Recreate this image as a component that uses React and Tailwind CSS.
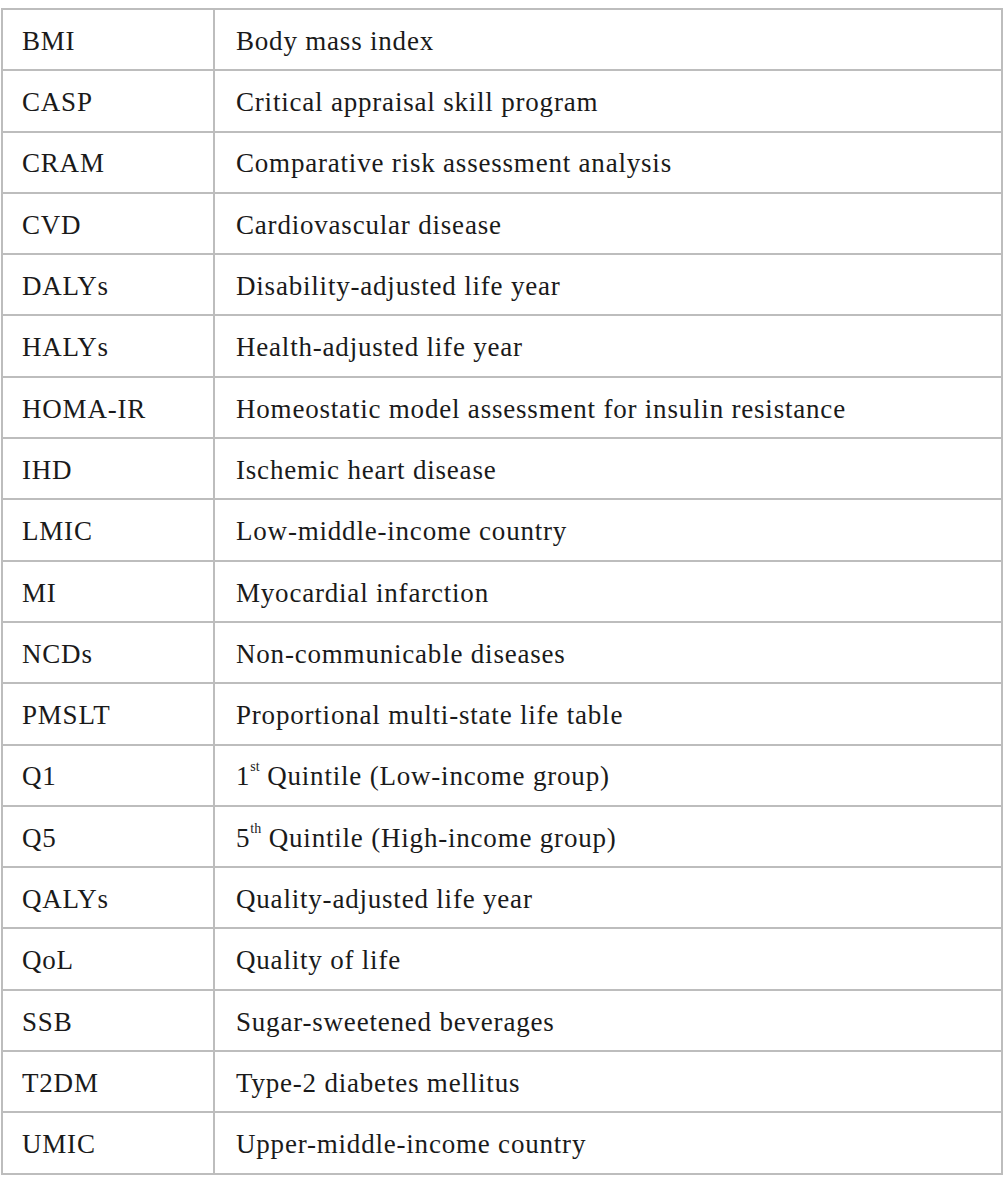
import React from "react";

const Sup = ({ n, s, rest }) => (
  <span>
    {n}
    <sup className="text-[14px] align-[7px] leading-none tracking-normal">{s}</sup>
    {" " + rest}
  </span>
);

const rows = [
  ["BMI", "Body mass index"],
  ["CASP", "Critical appraisal skill program"],
  ["CRAM", "Comparative risk assessment analysis"],
  ["CVD", "Cardiovascular disease"],
  ["DALYs", "Disability-adjusted life year"],
  ["HALYs", "Health-adjusted life year"],
  ["HOMA-IR", "Homeostatic model assessment for insulin resistance"],
  ["IHD", "Ischemic heart disease"],
  ["LMIC", "Low-middle-income country"],
  ["MI", "Myocardial infarction"],
  ["NCDs", "Non-communicable diseases"],
  ["PMSLT", "Proportional multi-state life table"],
  ["Q1", <Sup n="1" s="st" rest="Quintile (Low-income group)" />],
  ["Q5", <Sup n="5" s="th" rest="Quintile (High-income group)" />],
  ["QALYs", "Quality-adjusted life year"],
  ["QoL", "Quality of life"],
  ["SSB", "Sugar-sweetened beverages"],
  ["T2DM", "Type-2 diabetes mellitus"],
  ["UMIC", "Upper-middle-income country"],
];

export default function App() {
  return (
    <div className="bg-white w-[1004px] h-[1193px] pt-[8px] pl-[1px]" style={{ fontFamily: '"Liberation Serif", serif' }}>
      <div className="w-[1002px] border-t-2 border-l-2 border-r-2 border-[#bdbdbd]">
        {rows.map(([a, b], i) => (
          <div key={i} className="flex h-[61.3px] border-b-2 border-[#bdbdbd] text-[27px] tracking-[0.8px] text-[#1a1a1a]">
            <div className="w-[212px] shrink-0 border-r-2 border-[#bdbdbd] flex items-center pl-[19px] pt-[3px]">{a}</div>
            <div className="flex-1 flex items-center pl-[21px] pt-[3px]">{b}</div>
          </div>
        ))}
      </div>
    </div>
  );
}
